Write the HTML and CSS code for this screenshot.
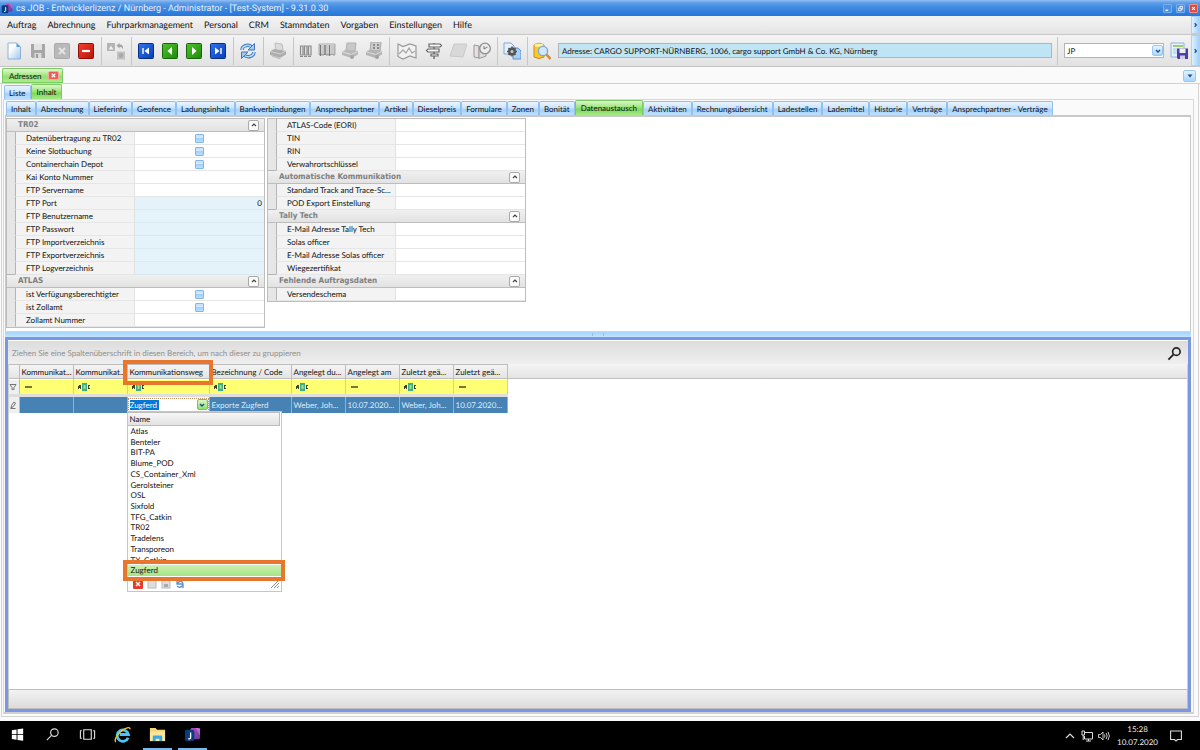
FILE: index.html
```
<!DOCTYPE html>
<html lang="de">
<head>
<meta charset="utf-8">
<title>cs JOB - Entwicklerlizenz / Nürnberg</title>
<link rel="stylesheet" href="styles.css">
</head>
<body>
<svg class="defs" aria-hidden="true">
  <defs>
    <linearGradient id="gBlue" x1="0" y1="0" x2="1" y2="1"><stop offset="0" stop-color="#2d74ee"/><stop offset="1" stop-color="#0a3fb4"/></linearGradient>
    <linearGradient id="gGreen" x1="0" y1="0" x2="1" y2="1"><stop offset="0" stop-color="#4fc22c"/><stop offset="1" stop-color="#1f8a0c"/></linearGradient>
    <linearGradient id="gRed" x1="0" y1="0" x2="1" y2="1"><stop offset="0" stop-color="#f5402c"/><stop offset="1" stop-color="#b81408"/></linearGradient>
    <linearGradient id="gPage" x1="0" y1="0" x2="1" y2="1"><stop offset="0.3" stop-color="#fff"/><stop offset="1" stop-color="#9cc6ee"/></linearGradient>
    <linearGradient id="gApp" x1="0" y1="0" x2="1" y2="1"><stop offset="0" stop-color="#b84cc8"/><stop offset="1" stop-color="#6a3a9c"/></linearGradient>
    <symbol id="abc" viewBox="0 0 12 8"><path d="M0 3h1v-1h2v4H2V5H1v1H0z" fill="#3c4428"/><path d="M4 0h5v8H4z" fill="#3fae86"/><path d="M5.500 2h2v4h-2z" fill="#a8dc80"/><path d="M12 2h-2v4h2V5h-1V3h1z" fill="#3c4428"/></symbol>
    <symbol id="app" viewBox="0 0 18 16"><rect x="7" y="1" width="10" height="12" rx="1.5" fill="url(#gApp)"/><path d="M12 1h3.500A1.500 1.500 0 0 1 17 2.500V9z" fill="#c98ad8" opacity=".6"/><rect x="1" y="3" width="10" height="12" rx="2" fill="#0b3c7c"/><path d="M7 6v5.500q0 1.300-2.500 1" fill="none" stroke="#fff" stroke-width="1.400"/></symbol>
    <symbol id="up" viewBox="0 0 8 8"><path d="M2 5l2-2 2 2" fill="none" stroke="#444" stroke-width="1.200"/></symbol>
    <symbol id="down" viewBox="0 0 8 8"><path d="M2 3l2 2 2-2" fill="none" stroke="#1c4f87" stroke-width="1.400"/></symbol>
  </defs>
</svg>

<header class="titlebar">
  <svg class="app-icon" viewBox="0 0 18 16"><use href="#app"/></svg>
  <h1>cs JOB - Entwicklerlizenz / Nürnberg - Administrator - [Test-System] - 9.31.0.30</h1>
  <button class="win" aria-label="Minimieren"><svg viewBox="0 0 10 10"><path d="M2 7.500h4" stroke="#fff" stroke-width="1.800"/></svg></button>
  <button class="win" aria-label="Wiederherstellen"><svg viewBox="0 0 10 10"><path d="M4 4V2h4v4H6M2 4.500h4V8H2z" fill="none" stroke="#fff" stroke-width="1.200"/></svg></button>
  <button class="win close" aria-label="Schließen"><svg viewBox="0 0 10 10"><path d="M3 3l4 4M7 3L3 7" stroke="#fff" stroke-width="1.600"/></svg></button>
</header>

<div class="menubar">
  <nav class="menu">
    <a href="#">Auftrag</a><a href="#">Abrechnung</a><a href="#">Fuhrparkmanagement</a><a href="#">Personal</a><a href="#">CRM</a><a href="#">Stammdaten</a><a href="#">Vorgaben</a><a href="#">Einstellungen</a><a href="#">Hilfe</a>
  </nav>
  <button class="more" aria-label="Mehr"><svg viewBox="0 0 8 8"><path d="M3 2l2 2-2 2" fill="none" stroke="#1c4f87" stroke-width="1.400"/></svg></button>
</div>

<div class="toolbar">
  <div class="tools">
    <button class="tool" aria-label="Neu"><svg viewBox="0 0 18 18"><path d="M3 1h8.500L15.500 5v12H3z" fill="url(#gPage)" stroke="#8fb2d6"/><path d="M11.500 1v4h4z" fill="#5a9ce0"/></svg></button>
    <button class="tool" aria-label="Speichern"><svg viewBox="0 0 18 18"><path d="M2 2h14v14H3.500L2 14.500z" fill="#a6a6a6"/><path d="M5 2h8v6H5z" fill="#e2e2e2"/><path d="M5.500 11h7v5h-7z" fill="#dcdcdc"/><path d="M7 12h2v4H7z" fill="#999"/></svg></button>
    <button class="tool" aria-label="Abbrechen"><svg viewBox="0 0 18 18"><rect x="1.500" y="1.500" width="15" height="15" rx="1" fill="#b9b9b9" stroke="#aaa"/><path d="M6 6l6 6M12 6l-6 6" stroke="#e6e6e6" stroke-width="1.800"/></svg></button>
    <button class="tool" aria-label="Löschen"><svg viewBox="0 0 18 18"><rect x="1.500" y="1.500" width="15" height="15" rx="1" fill="url(#gRed)" stroke="#8e1008"/><path d="M5 9h8" stroke="#fff" stroke-width="2.200"/></svg></button>
    <span class="sep"></span>
    <button class="tool" aria-label="Umwandeln"><svg viewBox="0 0 18 18"><path d="M0 1h8v8H0z" fill="#b4b4b4"/><path d="M1.500 7.500l2.500-4 2.500 4z" fill="#eee"/><path d="M9.500 3.500l3-2.500v1.500c3 0 4 2 3.500 5-.8-2-1.500-2.500-3.500-2.500v1.500z" fill="#a6a6a6"/><rect x="10" y="9.500" width="8" height="8" fill="#c2c2c2"/><circle cx="14" cy="13.500" r="2.400" fill="#aaa"/></svg></button>
    <span class="sep"></span>
    <button class="tool" aria-label="Erster"><svg viewBox="0 0 18 18"><rect x="1.500" y="1.500" width="15" height="15" rx="1" fill="url(#gBlue)" stroke="#083088"/><path d="M6 6v6" stroke="#fff" stroke-width="1.400"/><path d="M12 5.500v7L7.500 9z" fill="#fff"/></svg></button>
    <button class="tool" aria-label="Zurück"><svg viewBox="0 0 18 18"><rect x="1.500" y="1.500" width="15" height="15" rx="1" fill="url(#gGreen)" stroke="#15660a"/><path d="M11 5v8L6.500 9z" fill="#fff"/></svg></button>
    <button class="tool" aria-label="Weiter"><svg viewBox="0 0 18 18"><rect x="1.500" y="1.500" width="15" height="15" rx="1" fill="url(#gGreen)" stroke="#15660a"/><path d="M7 5v8l4.500-4z" fill="#fff"/></svg></button>
    <button class="tool" aria-label="Letzter"><svg viewBox="0 0 18 18"><rect x="1.500" y="1.500" width="15" height="15" rx="1" fill="url(#gBlue)" stroke="#083088"/><path d="M12 6v6" stroke="#fff" stroke-width="1.400"/><path d="M6 5.500v7L10.500 9z" fill="#fff"/></svg></button>
    <span class="sep"></span>
    <button class="tool" aria-label="Aktualisieren"><svg viewBox="0 0 18 18"><path d="M3 8C3 4 9 1.500 13 5M15 10c0 4-6 6.500-10 3" fill="none" stroke="#3c77bd" stroke-width="3.400"/><path d="M3 8C3 4 9 1.500 13 5M15 10c0 4-6 6.500-10 3" fill="none" stroke="#b9d8f4" stroke-width="1.600"/><path d="M15.500 1.500v6.500h-6.500zM2.500 16.500v-6.500h6.500z" fill="#a5cbee" stroke="#3c77bd"/></svg></button>
    <span class="sep"></span>
    <button class="tool" aria-label="Drucken"><svg viewBox="0 0 18 18"><path d="M6 1l7 1 1 6-7 1z" fill="#dcdcdc" stroke="#b4b4b4" stroke-width=".8"/><path d="M1 9.500L5 7l12 2v3.500L11 16 1 13z" fill="#adadad"/><path d="M1.500 9.500l10 2.500 5-3" fill="none" stroke="#d4d4d4"/><path d="M3 14l7 2.500 2-1" fill="none" stroke="#c4c4c4" stroke-width="1.500"/></svg></button>
    <span class="sep"></span>
    <button class="tool code" aria-label="Code"><svg viewBox="0 0 18 18"><path d="M3.500 4h2.500v9h-2.500zM7.500 4h2.500v9h-2.500zM11.500 4h2.500v9h-2.500zM3 14.500h3m1 0h3m1 0h3" fill="#e8e8e8" stroke="#8a8a8a" stroke-width="1.200"/></svg></button>
    <button class="tool bar" aria-label="Barcode"><svg viewBox="0 0 18 18"><path d="M1 2h16v10.500H1z" fill="#eee" stroke="#999" stroke-width=".8"/><path d="M2.500 3v11M7 3v10M11.500 3v11" stroke="#777" stroke-width="1.500"/><path d="M5 3v11M9 3v11M14 3v10M16 3v11" stroke="#999" stroke-width=".9"/></svg></button>
    <button class="tool" aria-label="Druckvorschau"><svg viewBox="0 0 18 18"><path d="M6 1h9l-1 8H5z" fill="#c8c8c8" stroke="#b0b0b0"/><path d="M1 10l4-2.500 12 1.500v3.500L10.500 16 1 13z" fill="#b8b8b8"/><path d="M1.500 10l9 2.500 6-3" fill="none" stroke="#ddd"/><circle cx="11" cy="15" r="2" fill="#a4a4a4"/></svg></button>
    <button class="tool" aria-label="Formulardruck"><svg viewBox="0 0 18 18"><path d="M6 0h10l-1 9H5z" fill="#ccc" stroke="#a8a8a8"/><path d="M8 2h2v2H8zm4 0h2v2h-2zM8 5h2v2H8zm4 0h2v2h-2z" fill="#8c8c8c"/><path d="M1 10l4-2.500 12 1.500v3.500L10.500 16 1 13z" fill="#b4b4b4"/><path d="M1.500 10l9 2.500 6-3" fill="none" stroke="#ddd"/><circle cx="12" cy="15" r="2" fill="#a0a0a0"/></svg></button>
    <span class="sep"></span>
    <button class="tool map" aria-label="Karte"><svg viewBox="0 0 20 18"><path d="M1 2l5 2.500L13 2l6 2v12l-6-2-7 3-5-2.500z" fill="#f2f2f2" stroke="#999" stroke-width="1.200"/><path d="M2 12l4-4 3 3 3-5 3 5 3-2" fill="none" stroke="#aaa" stroke-width="1.300"/></svg></button>
    <button class="tool" aria-label="Route"><svg viewBox="0 0 18 18"><path d="M9 1v16" stroke="#666" stroke-width="1.400"/><path d="M4 2h11l1.500 1.500L15 5H4zM14 7H3L1.500 8.500 3 10h11zM6 12h7v2H6z" fill="#f4f4f4" stroke="#666" stroke-width="1.200"/></svg></button>
    <button class="tool" aria-label="Notiz"><svg viewBox="0 0 18 18"><path d="M5 2h13l-4 13-13-1z" fill="#d8d8d8" stroke="#cacaca"/></svg></button>
    <button class="tool" aria-label="Zeit"><svg viewBox="0 0 18 18"><path d="M1 3l5 1v12l-5-1z" fill="#e8dede" stroke="#999"/><path d="M6 5h7v9l-7 2.500z" fill="#ddd" stroke="#999"/><circle cx="12" cy="6.500" r="5.300" fill="#ececec" stroke="#8e8e8e" stroke-width="1.300"/><path d="M11 4v3l3.500-2" fill="none" stroke="#777"/></svg></button>
    <span class="sep"></span>
    <button class="tool" aria-label="Einstellungen"><svg viewBox="0 0 18 18"><path d="M1 1h7l3 3v8H1z" fill="#e4f0fc" stroke="#7fa9d8"/><path d="M10 6h5l3 3v8h-8z" fill="#a9cff5" stroke="#5d92cc"/><circle cx="9" cy="9.500" r="2.800" fill="none" stroke="#555" stroke-width="2.600"/><path d="M9 4.500v10M4 9.500h10M5.500 6l7 7M12.500 6l-7 7" stroke="#555" stroke-width="1.600"/><circle cx="9" cy="9.500" r="1.500" fill="#bcd"/></svg></button>
    <span class="sep"></span>
    <button class="tool" aria-label="Adresse suchen"><svg viewBox="0 0 18 18"><path d="M1 3q5-3.500 10 0v12q-5 3-10 0z" fill="#fbc92e" stroke="#c88c12"/><ellipse cx="6" cy="3.200" rx="4.500" ry="1.600" fill="#fff0a8"/><circle cx="10" cy="9" r="4.600" fill="#cfe9fc" stroke="#7aa8d2" stroke-width="1.400"/><path d="M13.500 12.500l4 4.500" stroke="#e8801c" stroke-width="2.400"/></svg></button>
  </div>
  <input class="address" type="text" readonly aria-label="Adresse" value="Adresse: CARGO SUPPORT-NÜRNBERG, 1006, cargo support GmbH &amp; Co. KG, Nürnberg">
  <span class="sep"></span>
  <div class="combo user"><input type="text" aria-label="Benutzer" value="JP"><button aria-label="Benutzer wählen"><svg viewBox="0 0 8 8"><use href="#down"/></svg></button></div>
  <button class="tool" aria-label="Layout speichern"><svg viewBox="0 0 18 18"><path d="M1 1h13v14H1z" fill="#e6f2fc" stroke="#8fb6dc"/><path d="M3 3h10v2H3z" fill="#9fcf6c"/><path d="M3 7h4M3 9h4M3 11h4" stroke="#a9c9e6"/><path d="M7 6.500h11V17H8l-1-1z" fill="#4b3fa8"/><path d="M9.500 6.500h6V11h-6z" fill="#eee"/><path d="M10 13.500h5V17h-5z" fill="#cfcbe8"/></svg></button>
  <button class="more" aria-label="Mehr"><svg viewBox="0 0 8 8"><path d="M3 2l2 2-2 2" fill="none" stroke="#1c4f87" stroke-width="1.400"/></svg></button>
</div>

<div class="doc-tabs">
  <a class="doc-tab" href="#">Adressen</a>
  <button class="doc-close" aria-label="Adressen schließen"><svg viewBox="0 0 8 8"><path d="M2 2l4 4M6 2L2 6" stroke="#fff" stroke-width="1.400"/></svg></button>
  <button class="doc-list" aria-label="Fensterliste"><svg viewBox="0 0 8 8"><path d="M1.500 2.500h5L4 5.500z" fill="#1c4f87"/></svg></button>
</div>

<main class="workspace">
  <nav class="tabs views"><a href="#">Liste</a><a class="active" href="#">Inhalt</a></nav>
  <section class="content">
    <nav class="tabs pages">
      <a href="#">Inhalt</a><a href="#">Abrechnung</a><a href="#">Lieferinfo</a><a href="#">Geofence</a><a href="#">Ladungsinhalt</a><a href="#">Bankverbindungen</a><a href="#">Ansprechpartner</a><a href="#">Artikel</a><a href="#">Dieselpreis</a><a href="#">Formulare</a><a href="#">Zonen</a><a href="#">Bonität</a><a class="active" href="#">Datenaustausch</a><a href="#">Aktivitäten</a><a href="#">Rechnungsübersicht</a><a href="#">Ladestellen</a><a href="#">Lademittel</a><a href="#">Historie</a><a href="#">Verträge</a><a href="#">Ansprechpartner - Verträge</a>
    </nav>

    <div class="page">
      <div class="props">
        <section class="group">
          <h2>TR02<button aria-label="TR02 einklappen"><svg viewBox="0 0 8 8"><use href="#up"/></svg></button></h2>
          <label for="c1">Datenübertragung zu TR02</label><span class="check"><input id="c1" type="checkbox"></span>
          <label for="c2">Keine Slotbuchung</label><span class="check"><input id="c2" type="checkbox"></span>
          <label for="c3">Containerchain Depot</label><span class="check"><input id="c3" type="checkbox"></span>
          <label for="kai">Kai Konto Nummer</label><input id="kai" type="text">
          <label for="srv">FTP Servername</label><input id="srv" type="text">
          <label for="port">FTP Port</label><input id="port" class="tint" type="text" value="0">
          <label for="usr">FTP Benutzername</label><input id="usr" class="tint" type="text">
          <label for="pwd">FTP Passwort</label><input id="pwd" class="tint" type="text">
          <label for="imp">FTP Importverzeichnis</label><input id="imp" class="tint" type="text">
          <label for="exp">FTP Exportverzeichnis</label><input id="exp" class="tint" type="text">
          <label for="log">FTP Logverzeichnis</label><input id="log" class="tint" type="text">
        </section>
        <section class="group">
          <h2>ATLAS<button aria-label="ATLAS einklappen"><svg viewBox="0 0 8 8"><use href="#up"/></svg></button></h2>
          <label for="c4">ist Verfügungsberechtigter</label><span class="check"><input id="c4" type="checkbox"></span>
          <label for="c5">ist Zollamt</label><span class="check"><input id="c5" type="checkbox"></span>
          <label for="zoll">Zollamt Nummer</label><input id="zoll" type="text">
        </section>
      </div>
      <div class="props">
        <section class="group">
          <label for="eori">ATLAS-Code (EORI)</label><input id="eori" type="text">
          <label for="tin">TIN</label><input id="tin" type="text">
          <label for="rin">RIN</label><input id="rin" type="text">
          <label for="verw">Verwahrortschlüssel</label><input id="verw" type="text">
        </section>
        <section class="group">
          <h2>Automatische Kommunikation<button aria-label="Automatische Kommunikation einklappen"><svg viewBox="0 0 8 8"><use href="#up"/></svg></button></h2>
          <label for="std">Standard Track and Trace-Sc...</label><input id="std" type="text">
          <label for="pod">POD Export Einstellung</label><input id="pod" type="text">
        </section>
        <section class="group">
          <h2>Tally Tech<button aria-label="Tally Tech einklappen"><svg viewBox="0 0 8 8"><use href="#up"/></svg></button></h2>
          <label for="mt">E-Mail Adresse Tally Tech</label><input id="mt" type="text">
          <label for="so">Solas officer</label><input id="so" type="text">
          <label for="ms">E-Mail Adresse Solas officer</label><input id="ms" type="text">
          <label for="wz">Wiegezertifikat</label><input id="wz" type="text">
        </section>
        <section class="group">
          <h2>Fehlende Auftragsdaten<button aria-label="Fehlende Auftragsdaten einklappen"><svg viewBox="0 0 8 8"><use href="#up"/></svg></button></h2>
          <label for="vs">Versendeschema</label><input id="vs" type="text">
        </section>
      </div>
    </div>

    <div class="splitter"><span></span></div>

    <section class="grid-frame">
      <div class="group-panel">
        <span>Ziehen Sie eine Spaltenüberschrift in diesen Bereich, um nach dieser zu gruppieren</span>
        <button aria-label="Suchen"><svg viewBox="0 0 16 16"><circle cx="10" cy="6" r="4" fill="none" stroke="#222" stroke-width="1.800"/><path d="M7 9l-5.500 5.500" stroke="#222" stroke-width="2"/></svg></button>
      </div>
      <div class="grid-body">
        <table>
          <colgroup><col class="c-ind"><col class="c-s"><col class="c-s"><col class="c-l"><col class="c-l"><col class="c-s"><col class="c-s"><col class="c-s"><col class="c-s"></colgroup>
          <thead>
            <tr><th></th><th>Kommunikat...</th><th>Kommunikat...</th><th class="hot">Kommunikationsweg<span class="mark"></span></th><th>Bezeichnung / Code</th><th>Angelegt du...</th><th>Angelegt am</th><th>Zuletzt geä...</th><th>Zuletzt geä...</th></tr>
          </thead>
          <tbody>
            <tr class="filter">
              <td class="ind"><svg viewBox="0 0 8 8"><path d="M1 1.500h6L5 4.500v2H3v-2z" fill="none" stroke="#777"/></svg></td>
              <td><i class="eq"></i></td>
              <td><svg class="abc"><use href="#abc"/></svg></td>
              <td><svg class="abc"><use href="#abc"/></svg></td>
              <td><svg class="abc"><use href="#abc"/></svg></td>
              <td><svg class="abc"><use href="#abc"/></svg></td>
              <td><i class="eq"></i></td>
              <td><svg class="abc"><use href="#abc"/></svg></td>
              <td><i class="eq"></i></td>
            </tr>
            <tr class="row">
              <td class="ind"><svg viewBox="0 0 8 8"><path d="M2 7l.5-2.500L5 1l1.500 1L4.500 5.500zM1.500 7.500h5" fill="none" stroke="#666" stroke-width=".9"/></svg></td>
              <td></td>
              <td></td>
              <td class="edit">
                <div class="combo cell"><span class="field"><input type="text" aria-label="Kommunikationsweg" value="Zugferd"></span><button aria-label="Liste öffnen"><svg viewBox="0 0 8 8"><use href="#down"/></svg></button></div>
                <div class="popup">
                  <div class="popup-head">Name</div>
                  <ul>
                    <li>Atlas</li><li>Benteler</li><li>BIT-PA</li><li>Blume_POD</li><li>CS_Container_Xml</li><li>Gerolsteiner</li><li>OSL</li><li>Sixfold</li><li>TFG_Catkin</li><li>TR02</li><li>Tradelens</li><li>Transporeon</li><li>TX_Catkin</li><li class="selected">Zugferd<span class="mark"></span></li>
                  </ul>
                  <div class="popup-foot">
                    <button aria-label="Schließen"><svg viewBox="0 0 10 10"><rect width="10" height="10" rx="1" fill="#e8392c"/><path d="M3 3l4 4M7 3L3 7" stroke="#fff" stroke-width="1.400"/></svg></button>
                    <button aria-label="Neu"><svg viewBox="0 0 10 10"><rect x="1" y="1" width="8" height="8" fill="#ddd" stroke="#bbb"/></svg></button>
                    <button aria-label="Bearbeiten"><svg viewBox="0 0 10 10"><rect x="1" y="1" width="8" height="8" fill="#ddd" stroke="#bbb"/><path d="M3 5h4v3H3z" fill="#aaa"/></svg></button>
                    <button aria-label="Aktualisieren"><svg viewBox="0 0 10 10"><path d="M2 1v4h4M8 9V5H5M2 5q3-5 6-1M8 6Q5 10 2 7" fill="none" stroke="#5b8fd0" stroke-width="1.300"/></svg></button>
                    <svg class="grip" viewBox="0 0 10 10"><path d="M1 9l8-8M4 9l5-5M7 9l2-2" stroke="#888"/></svg>
                  </div>
                </div>
              </td>
              <td>Exporte Zugferd</td><td>Weber, Joh...</td><td>10.07.2020...</td><td>Weber, Joh...</td><td>10.07.2020...</td>
            </tr>
          </tbody>
        </table>
      </div>
      <div class="grid-foot"></div>
    </section>
  </section>
</main>

<footer class="taskbar">
  <button class="task" aria-label="Start"><svg viewBox="0 0 18 18"><path d="M3 4.500l5-.8v5H3zM9 3.500l6-.9v6.100H9zM3 9.500h5v5l-5-.8zM9 9.500h6v6.100l-6-.9z" fill="#fff"/></svg></button>
  <button class="task" aria-label="Suche"><svg viewBox="0 0 18 18"><circle cx="11" cy="7" r="4" fill="none" stroke="#ddd" stroke-width="1.200"/><path d="M8 10l-5 5" stroke="#ddd" stroke-width="1.200"/></svg></button>
  <button class="task" aria-label="Taskansicht"><svg viewBox="0 0 18 18"><path d="M5 4h8v10H5zM3 5H1.500v8H3M15 5h1.500v8H15" fill="none" stroke="#ddd" stroke-width="1.200"/></svg></button>
  <button class="task" aria-label="Internet Explorer"><svg viewBox="0 0 18 18"><path d="M15 12.500A6 6 0 1 1 15.300 9H6" fill="none" stroke="#4cc3f2" stroke-width="3"/><path d="M2 17C-1 15 5 5 14 2q3-1 3 1.500" fill="none" stroke="#f2c230" stroke-width="1.500"/></svg></button>
  <button class="task open" aria-label="Explorer"><svg viewBox="0 0 18 18"><path d="M1 2h6l1.500 2H17v12H1z" fill="#f6d675"/><path d="M1 6h16v10H1z" fill="#fde69a"/><path d="M4 16v-5q0-1 1-1h8q1 0 1 1v5h-3v-2.500H7V16z" fill="#3aa9dd"/></svg></button>
  <button class="task open" aria-label="cs JOB"><svg viewBox="0 0 18 16"><use href="#app"/></svg></button>
  <div class="tray">
    <svg viewBox="0 0 12 12"><path d="M2 8l4-4 4 4" fill="none" stroke="#ddd" stroke-width="1.200"/></svg>
    <svg viewBox="0 0 12 12"><path d="M4 2.500h7.500V9H3.500V6M1 1h2.500v4H1zM2.200 5v5M5 11h5M7.500 9v2" fill="none" stroke="#ddd"/></svg>
    <svg viewBox="0 0 12 12"><path d="M.5 4.500h2L5 2v8L2.500 7.500h-2zM6.500 4.500q1 1.500 0 3M8.200 3q2 3 0 6M10 1.800q2.800 4.200 0 8.400" fill="none" stroke="#ddd" stroke-width=".9"/></svg>
    <time>15:28<br>10.07.2020</time>
    <svg class="note" viewBox="0 0 12 12"><path d="M.6 1h10.800v8.500H7.500L6 11 4.500 9.500H.6z" fill="none" stroke="#ddd" stroke-width="1.100"/></svg>
  </div>
</footer>
</body>
</html>
```
FILE: styles.css
```
* { box-sizing: border-box; }
body {
  margin: 0; height: 100vh; display: flex; flex-direction: column;
  background: #fafafa; color: #111; overflow: hidden;
  font: 8px/12px Lato, "Noto Sans", sans-serif;
  text-rendering: geometricPrecision;
}
button, input { font: inherit; color: inherit; margin: 0; padding: 0; border: 0; background: none; min-width: 0; border-radius: 0; text-rendering: inherit; }
button { display: flex; align-items: center; justify-content: center; }
input { outline: 0; }
a { color: inherit; text-decoration: none; }
h1, h2, ul { margin: 0; padding: 0; font: inherit; list-style: none; }
svg { display: block; }
.defs { position: absolute; width: 0; height: 0; }

.titlebar { display: flex; align-items: center; gap: 3px; height: 16px; padding: 0 2px 0 1px; color: #e8f2ff; background: linear-gradient(#93bff2, #5a9de8 3px, #4089e0 50%, #2477db); }
.titlebar h1 { flex: 1; padding-top: 1px; font-size: 9px; font-family: Roboto, "Noto Sans", sans-serif; }
.app-icon { width: 12px; height: 11px; }
.win { width: 9px; height: 9px; margin-left: 1px; border: 1px solid #78aeee; background: #4d8fe0; border-radius: 1px; }
.win svg { width: 9px; height: 9px; }
.close { background: #e5473c; border-color: #f09088; }

.menubar { display: flex; height: 19px; background: linear-gradient(#f4f4f4, #e4e4e4); border-bottom: 1px solid #c8c8c8; }
.menu { flex: 1; display: flex; align-items: center; padding-left: 2px; font-size: 9px; }
.menu a { padding: 0 6px 0 5px; }
.more { width: 9px; align-self: stretch; border: 1px solid #a9d2f7; background: linear-gradient(90deg, #dff0ff, #a3d1fb); }
.more svg { width: 8px; height: 8px; }

.toolbar { display: flex; align-items: center; height: 32px; background: linear-gradient(#f3f3f3, #e2e2e2); border-bottom: 1px solid #c4c4c4; }
.tools { display: flex; align-items: center; padding-left: 2px; }
.tool { width: 24px; height: 28px; flex: none; }
.tool svg { width: 18px; height: 18px; }
.tool.code { width: 20px; }
.tool.bar { width: 22px; }
.tool.map { width: 30px; }
.tool.map svg { width: 20px; }
.sep { width: 1px; height: 28px; margin: 0 2px 0 3px; background: #c6c6c6; flex: none; }
.address { flex: 1; height: 15px; margin: 0 2px 0 4px; padding: 0 3px; border: 1px solid #b4b4b4; background: #bfe4f4; }
.combo { display: flex; align-items: center; background: #fff; border: 1px solid #b4b4b4; }
.combo input { flex: 1; width: 0; }
.combo button { width: 11px; height: 11px; border: 1px solid #9cc8f0; border-radius: 2px; background: linear-gradient(#e6f4ff, #a9d6fc); }
.combo button svg { width: 8px; height: 8px; }
.user { width: 100px; height: 15px; margin: 0 3px 0 4px; padding-left: 2px; }

.doc-tabs { display: flex; align-items: center; height: 17px; padding: 1px 4px 0 2px; border-bottom: 1px solid #d2d2d2; }
.doc-tab { height: 15px; padding: 1px 7px 0 6px; border: 1px solid #7ccb62; border-right: 0; border-radius: 2px 0 0 0; background: linear-gradient(#e3f9d4, #92e06f 60%, #aeea92); }
.doc-close { width: 15px; height: 15px; border: 1px solid #7ccb62; border-left: 0; border-radius: 0 2px 0 0; background: linear-gradient(#e3f9d4, #92e06f 60%, #aeea92); justify-content: flex-start; }
.doc-close svg { width: 11px; height: 9px; background: #ee5b50; border: 1px solid #f7a8a0; border-radius: 2px; }
.doc-list { width: 13px; height: 12px; margin-left: auto; border: 1px solid #9cc8f0; border-radius: 2px; background: linear-gradient(#e2f2ff, #aad6fb); }
.doc-list svg { width: 8px; height: 8px; }

.workspace { flex: 1; min-height: 0; display: flex; flex-direction: column; margin: 0 1px 4px; border: 1px solid #d4d4d4; border-top: 0; }
.tabs { display: flex; align-items: flex-end; }
.tabs a { height: 14px; padding: 1px 4px 0; white-space: nowrap; border: 1px solid #92bfec; border-bottom: 0; border-radius: 2px 2px 0 0; background: linear-gradient(#e9f5ff, #c9e4ff 45%, #a2d0fc 60%, #bfe0ff); }
.tabs .active { height: 15px; padding: 1px 5px 0; border-color: #7ccb62; background: linear-gradient(#dcf7ca, #a4e686 40%, #7fda5a 60%, #a4e884); }
.views { height: 15px; padding-left: 2px; }
.content { flex: 1; min-height: 0; display: flex; flex-direction: column; margin: 0 4px 2px 1px; padding: 0 2px 0 1px; border: 1px solid #d8d8d8; border-bottom: 2px solid #d0d0d0; }
.pages { height: 15px; padding-left: 1px; flex: none; }

.page { flex: none; display: flex; align-items: flex-start; gap: 2px; padding: 1px 1px 3px 0; background: #fff; border: 1px solid #c8c8c8; border-top-width: 2px; border-bottom: 0; }
.props { width: 259px; border: 1px solid #bdbdbd; }
.group { display: grid; grid-template-columns: 119px 1fr; grid-auto-rows: 13px; padding-left: 8px; background: linear-gradient(90deg, #e6e6e6 0, #e6e6e6 8px, #fff 8px); }
.group + .group { border-top: 1px solid #b4b4b4; margin-top: -1px; }
.group h2 { grid-column: 1 / -1; display: flex; align-items: center; justify-content: space-between; margin-left: -8px; padding: 0 5px 0 11px; font: bold 8px/12px "DejaVu Sans Condensed", "Noto Sans", sans-serif; color: #808080; background: linear-gradient(#f0f0f0, #e2e2e2); border-bottom: 1px solid #bdbdbd; }
.group h2 button { width: 11px; height: 11px; border: 1px solid #aaa; border-radius: 2px; background: #fafafa; }
.group h2 svg { width: 8px; height: 8px; }
.group label { padding-left: 10px; border-left: 1px solid #b4b4b4; border-bottom: 1px solid #e6e6e6; background: #f3f3f3; white-space: nowrap; overflow: hidden; }
.group > input, .check { width: 100%; height: 13px; padding: 0 2px; border-left: 1px solid #e2e2e2; border-bottom: 1px solid #e6e6e6; background: #fff; text-align: right; }
.group > .tint { background: #e4f3f9; border-bottom-color: #d9e9ef; }
.check { display: flex; align-items: center; justify-content: center; }
.check input { appearance: none; width: 9px; height: 9px; border: 1px solid #86b7e4; border-radius: 1px; background: linear-gradient(#c4e0fb, #d6ebff 45%, #9fd0fb 50%, #b9e0ff); }

.splitter { flex: none; height: 6px; display: flex; justify-content: center; align-items: center; border-top: 1px solid #d4d4d4; background: linear-gradient(#a2d4fb, #c4e4ff); }
.splitter span { width: 12px; height: 3px; border: 1px solid #8cbfee; border-width: 0 1px; }
.grid-frame { flex: 1; min-height: 0; display: flex; flex-direction: column; border: 3px solid #7a97e2; background: #fff; padding: 1px 0 0; }
.group-panel { flex: none; display: flex; align-items: center; justify-content: space-between; height: 23px; padding: 1px 6px 0 4px; color: #909090; background: linear-gradient(#dcdcdc, #efefef); }
.group-panel svg { width: 15px; height: 15px; }
.grid-body { flex: 1; border: 1px solid #d0d0d0; border-width: 0 1px; background: linear-gradient(#f5f5f5, #e4e4e4 14px, #c0c0c0 14px, #c0c0c0 15px, #fff 15px); }
table { table-layout: fixed; border-collapse: collapse; width: 497px; }
.c-ind { width: 10px; }
.c-s { width: 54px; }
.c-l { width: 82px; }
th, td { padding: 0 0 0 2px; text-align: left; font-weight: normal; white-space: nowrap; overflow: hidden; border-right: 1px solid #bdbdbd; }
th { height: 15px; padding-bottom: 1px; border-top: 1px solid #bdbdbd; }
.hot, .edit { position: relative; overflow: visible; }
.filter td { height: 16px; background: #ffff73; border-right-color: #d6d68a; padding-left: 4px; border-bottom: 0; }
.row td { height: 17px; border-top: 3px solid #dedede; color: #dcecfa; background: #4682b4; border-right-color: #8fb2d2; }
.filter .ind, .row .ind { padding: 0; background: #efefef; border-right-color: #bdbdbd; }
.ind svg { width: 8px; height: 8px; }
.abc { width: 12px; height: 8px; }
.eq { display: block; width: 7px; height: 2px; margin-left: 1px; background: #77773c; }
.row .edit { padding: 0; background: #fff; color: #111; }
.cell { height: 14px; border: 1px dotted #c09060; padding-left: 1px; }
.cell .field { flex: 1; display: flex; }
.field input { flex: none; width: 29px; height: 10px; color: #fff; background: #0078d7; }
.cell button { border-color: #79c45e; background: linear-gradient(#d8f7c8, #8fe06c); }
.popup { position: absolute; top: 14px; left: -1px; width: 155px; height: 181px; z-index: 2; display: flex; flex-direction: column; background: #fff; border: 1px solid #c6c6c6; color: #111; }
.popup-head { flex: none; height: 14px; margin-right: 1px; padding-left: 2px; border: 1px solid #bdbdbd; border-left: 0; background: linear-gradient(#f6f6f6, #e2e2e2); }
.popup ul { flex: 1; display: grid; grid-auto-rows: 1fr; }
.popup li { padding-left: 3px; line-height: 10px; min-height: 0; }
.popup .selected { position: relative; background: linear-gradient(#cdf0b4, #a5e583); }
.popup-foot { flex: none; display: flex; align-items: center; gap: 4px; height: 15px; padding: 0 1px 0 5px; }
.popup-foot svg { width: 10px; height: 10px; }
.popup-foot .grip { margin-left: auto; }
.mark { position: absolute; inset: -5px -4px -5px -5px; border: 4px solid #e8762c; z-index: 1; }
.grid-foot { flex: none; height: 20px; border: 1px solid #bdbdbd; background: linear-gradient(#f2f2f2, #dcdcdc); }

.taskbar { flex: none; display: flex; height: 29px; background: #000; color: #e6e6e6; }
.task { width: 35px; border-bottom: 2px solid transparent; }
.task svg { width: 17px; height: 17px; }
.task.open { width: 29px; margin: 0 3px; border-color: #76b9ed; }
.tray { margin-left: auto; display: flex; align-items: center; gap: 5px; padding-right: 18px; }
.tray svg { width: 12px; height: 12px; }
.tray time { text-align: center; line-height: 13px; padding: 0 7px 0 2px; }
```
